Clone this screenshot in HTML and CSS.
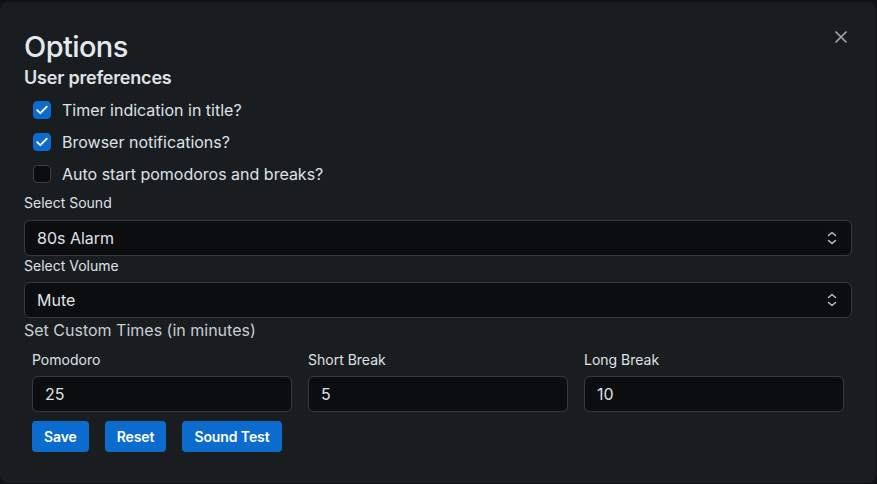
FILE: index.html
```html
<!DOCTYPE html>
<html lang="en">
<head>
<meta charset="utf-8">
<title>Options</title>
<link rel="stylesheet" href="styles.css">
</head>
<body>
<div class="modal">
  <button class="close" aria-label="Close">
    <svg width="14" height="14" viewBox="0 0 14 14"><path d="M1.5 1.5 L12.5 12.5 M12.5 1.5 L1.5 12.5" stroke="#a3a8ad" stroke-width="1.6" fill="none"/></svg>
  </button>
  <h1 class="title">Options</h1>
  <h2 class="subtitle">User preferences</h2>
  <div class="checks">
    <label class="check"><span class="box on"><svg width="12" height="10" viewBox="0 0 12 10"><path d="M1.2 5.2 L4.3 8.2 L10.8 1.6" stroke="#fff" stroke-width="1.8" fill="none" stroke-linecap="round" stroke-linejoin="round"/></svg></span>Timer indication in title?</label>
    <label class="check"><span class="box on"><svg width="12" height="10" viewBox="0 0 12 10"><path d="M1.2 5.2 L4.3 8.2 L10.8 1.6" stroke="#fff" stroke-width="1.8" fill="none" stroke-linecap="round" stroke-linejoin="round"/></svg></span>Browser notifications?</label>
    <label class="check"><span class="box"></span>Auto start pomodoros and breaks?</label>
  </div>
  <div class="field-label first">Select Sound</div>
  <div class="select first"><span>80s Alarm</span><svg width="10" height="14" viewBox="0 0 10 14"><path d="M1.5 4.5 L5 1.5 L8.5 4.5 M1.5 9.5 L5 12.5 L8.5 9.5" stroke="#b9bec3" stroke-width="1.5" fill="none" stroke-linecap="round" stroke-linejoin="round"/></svg></div>
  <div class="field-label">Select Volume</div>
  <div class="select"><span>Mute</span><svg width="10" height="14" viewBox="0 0 10 14"><path d="M1.5 4.5 L5 1.5 L8.5 4.5 M1.5 9.5 L5 12.5 L8.5 9.5" stroke="#b9bec3" stroke-width="1.5" fill="none" stroke-linecap="round" stroke-linejoin="round"/></svg></div>
  <div class="section">Set Custom Times (in minutes)</div>
  <div class="times">
    <div class="col"><div class="field-label small">Pomodoro</div><div class="input">25</div></div>
    <div class="col"><div class="field-label small">Short Break</div><div class="input">5</div></div>
    <div class="col"><div class="field-label small">Long Break</div><div class="input">10</div></div>
  </div>
  <div class="buttons">
    <button class="btn">Save</button>
    <button class="btn">Reset</button>
    <button class="btn">Sound Test</button>
  </div>
</div>
</body>
</html>
```
FILE: styles.css
```css
* { box-sizing: border-box; }
html, body { margin: 0; padding: 0; }
body {
  background: #0e1012;
  font-family: Inter, "Noto Sans", sans-serif;
  color: #dee2e6;
  width: 877px;
  height: 484px;
  overflow: hidden;
}
.modal {
  position: relative;
  margin-top: 2px;
  width: 876px;
  height: 481px;
  background: #1a1d20;
  border-radius: 8px;
  padding: 28px 24px 0 24px;
}
.close {
  position: absolute;
  top: 28px;
  right: 28px;
  background: none;
  border: 0;
  padding: 0;
  width: 14px;
  height: 14px;
  display: flex;
}
.title {
  margin: 0;
  font-size: 29px;
  line-height: 34px;
  font-weight: 500;
  color: #e4e9ee;
  letter-spacing: -0.6px;
}
.subtitle {
  margin: 3px 0 0 0;
  font-size: 18px;
  line-height: 22px;
  font-weight: 600;
  color: #dfe3e7;
  letter-spacing: -0.2px;
}
.checks {
  margin-top: 9px;
  display: flex;
  flex-direction: column;
  gap: 8px;
  padding-left: 9px;
}
.check {
  display: flex;
  align-items: center;
  gap: 11px;
  font-size: 16px;
  line-height: 24px;
  color: #dee2e6;
}
.box {
  width: 18px;
  height: 18px;
  border-radius: 4px;
  background: #0b0c0e;
  border: 1px solid #3a3f44;
  display: flex;
  align-items: center;
  justify-content: center;
}
.box.on {
  background: #0c6ccd;
  border-color: #0c6ccd;
}
.field-label {
  font-size: 14px;
  line-height: 20px;
  color: #dee2e6;
}
.field-label.first { margin-top: 7px; }
.select, .input {
  height: 36px;
  background: #0c0d0f;
  border: 1px solid #363a3f;
  border-radius: 6px;
  display: flex;
  align-items: center;
  font-size: 16px;
  color: #dee2e6;
}
.select {
  margin-top: 6px;
  justify-content: space-between;
  padding: 0 14px 0 12px;
}
.select.first { margin-top: 7px; }
.section {
  font-size: 16px;
  line-height: 24px;
  color: #c9cdd1;
}
.times {
  display: grid;
  grid-template-columns: repeat(3, 1fr);
  margin-top: 8px;
}
.col {
  padding: 0 8px;
}
.input {
  margin-top: 6px;
  padding: 0 12px;
}
.buttons {
  display: flex;
  gap: 16px;
  margin-top: 9px;
  padding-left: 8px;
}
.btn {
  height: 31px;
  padding: 0 12px;
  background: #0c6ccd;
  border: 0;
  border-radius: 4px;
  color: #fff;
  font-family: Inter, "Noto Sans", sans-serif;
  font-size: 14px;
  font-weight: 600;
  letter-spacing: -0.1px;
}
```
